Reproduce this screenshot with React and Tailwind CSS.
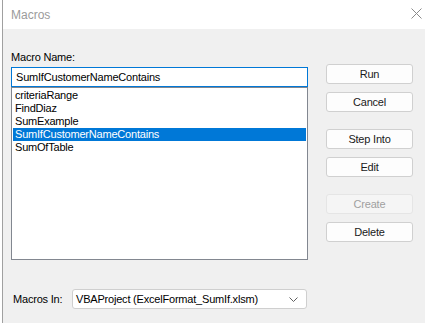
export default function App() {
  const items = ["criteriaRange", "FindDiaz", "SumExample", "SumIfCustomerNameContains", "SumOfTable"];
  const selected = 3;
  const btn = "h-[20px] w-[87px] rounded-[3px] border border-[#d0d0d0] bg-[#fdfdfd] flex items-center justify-center text-[#1a1a1a]";
  return (
    <div
      className="w-[425px] h-[323px] flex bg-white overflow-hidden text-[11px] tracking-[-0.2px]"
      style={{ fontFamily: '"Liberation Sans", Arial, sans-serif' }}
    >
      <div className="w-[2px] bg-white" />
      <div className="flex-1 flex flex-col border-l border-[#a0a0a0]">
        <div className="h-[29px] shrink-0 bg-white flex items-center justify-between pl-[8px] pr-[3px]">
          <span className="text-[12px] text-[#9b9b9b] tracking-normal">Macros</span>
          <svg width="11" height="11" viewBox="0 0 11 11" className="mb-[3px]">
            <path d="M0.5 0.5 L10.5 10.5 M10.5 0.5 L0.5 10.5" stroke="#8a8a8a" strokeWidth="1" fill="none" />
          </svg>
        </div>
        <div className="flex-1 bg-[#f0f0f0] flex pl-[8px]">
          <div className="w-[297px] flex flex-col">
            <div className="mt-[21px] h-[15px] leading-[15px] text-black">Macro Name:</div>
            <div className="mt-[2px] h-[20px] border border-[#0078d7] bg-white flex items-center pl-[4px] text-black">
              SumIfCustomerNameContains
            </div>
            <div className="h-[173px] border border-[#828790] bg-white pt-[1px] px-[1px]">
              {items.map((it, i) => (
                <div
                  key={it}
                  className={
                    "h-[13px] leading-[13px] pl-[2px] " +
                    (i === selected ? "bg-[#0078d7] text-white" : "text-black")
                  }
                >
                  {it}
                </div>
              ))}
            </div>
            <div className="mt-[29px] flex items-center">
              <span className="ml-[2px] w-[59px] text-black">Macros In:</span>
              <div className="w-[235px] h-[20px] border border-[#cfcfcf] rounded-[3px] bg-white flex items-center justify-between pl-[3px] pr-[8px] text-black">
                <span>VBAProject (ExcelFormat_SumIf.xlsm)</span>
                <svg width="9" height="5" viewBox="0 0 9 5">
                  <path d="M0.5 0.5 L4.5 4.5 L8.5 0.5" stroke="#606060" strokeWidth="1" fill="none" />
                </svg>
              </div>
            </div>
          </div>
          <div className="ml-[18px] flex flex-col pt-[35px]">
            <div className={btn}>Run</div>
            <div className={btn + " mt-[8px]"}>Cancel</div>
            <div className={btn + " mt-[17px]"}>Step Into</div>
            <div className={btn + " mt-[8px]"}>Edit</div>
            <div className="mt-[17px] h-[20px] w-[87px] rounded-[3px] border border-[#e5e5e5] bg-[#f5f5f5] flex items-center justify-center text-[#a0a0a0]">
              Create
            </div>
            <div className={btn + " mt-[8px]"}>Delete</div>
          </div>
        </div>
      </div>
    </div>
  );
}
